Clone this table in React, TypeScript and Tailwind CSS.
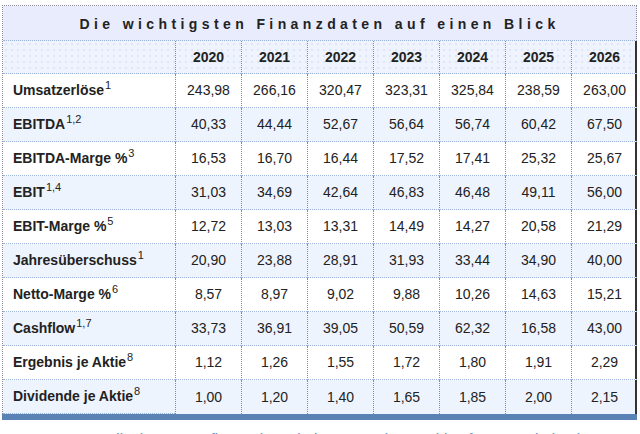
import React from 'react';

// Finanzdaten-Tabelle: Titelzeile, Jahreskopf, zehn Kennzahlen
const years = ['2020', '2021', '2022', '2023', '2024', '2025', '2026'];

const rows: { label: string; sup: string; values: string[] }[] = [
  { label: 'Umsatzerlöse', sup: '1', values: ['243,98', '266,16', '320,47', '323,31', '325,84', '238,59', '263,00'] },
  { label: 'EBITDA', sup: '1,2', values: ['40,33', '44,44', '52,67', '56,64', '56,74', '60,42', '67,50'] },
  { label: 'EBITDA-Marge %', sup: '3', values: ['16,53', '16,70', '16,44', '17,52', '17,41', '25,32', '25,67'] },
  { label: 'EBIT', sup: '1,4', values: ['31,03', '34,69', '42,64', '46,83', '46,48', '49,11', '56,00'] },
  { label: 'EBIT-Marge %', sup: '5', values: ['12,72', '13,03', '13,31', '14,49', '14,27', '20,58', '21,29'] },
  { label: 'Jahresüberschuss', sup: '1', values: ['20,90', '23,88', '28,91', '31,93', '33,44', '34,90', '40,00'] },
  { label: 'Netto-Marge %', sup: '6', values: ['8,57', '8,97', '9,02', '9,88', '10,26', '14,63', '15,21'] },
  { label: 'Cashflow', sup: '1,7', values: ['33,73', '36,91', '39,05', '50,59', '62,32', '16,58', '43,00'] },
  { label: 'Ergebnis je Aktie', sup: '8', values: ['1,12', '1,26', '1,55', '1,72', '1,80', '1,91', '2,29'] },
  { label: 'Dividende je Aktie', sup: '8', values: ['1,00', '1,20', '1,40', '1,65', '1,85', '2,00', '2,15'] },
];

export default function App() {
  return (
    <div className="w-[640px] h-[434px] overflow-hidden bg-white pt-[5px] pl-[2px] font-['Liberation_Sans',Arial,sans-serif] text-[14px] text-[#222]">
      <table className="w-[635px] table-fixed border-separate border-spacing-0 border-t border-l border-dotted border-[#8a8a9a]">
        <colgroup>
          <col className="w-[172px]" />
          {years.map((y) => (
            <col key={y} className="w-[66px]" />
          ))}
        </colgroup>
        <thead>
          <tr>
            <th
              colSpan={8}
              className="h-[35px] pt-[2px] bg-[#e8ecfd] border-r border-b border-dotted border-r-[#8a8a9a] border-b-[#9cb3d8] text-center font-bold tracking-[4.4px] text-[14px]"
            >
              Die wichtigsten Finanzdaten auf einen Blick
            </th>
          </tr>
          <tr className="bg-[#eef3fe] bg-[radial-gradient(#dde5f6_1px,transparent_1px)] bg-[size:6px_6px]">
            <th className="h-[33px] border-b border-dotted border-[#9cb3d8]" />
            {years.map((y, i) => (
              <th
                key={y}
                className={`h-[33px] border-b border-l border-dotted border-b-[#9cb3d8] border-l-[#8a8a9a] text-center font-bold ${
                  i === years.length - 1 ? 'shadow-[inset_-2px_0_0_#333]' : ''
                }`}
              >
                {y}
              </th>
            ))}
          </tr>
        </thead>
        <tbody>
          {rows.map((row, r) => {
            const light = r % 2 === 1;
            return (
              <tr key={row.label} className={light ? 'bg-[#eef4fe]' : 'bg-white'}>
                <td className="h-[34px] pl-[10px] border-b border-dotted border-[#9cb3d8] font-bold whitespace-nowrap">
                  {row.label}
                  <sup className="ml-[1px] text-[11px] font-normal relative -top-[6px]">{row.sup}</sup>
                </td>
                {row.values.map((v, i) => (
                  <td
                    key={i}
                    className={`h-[34px] text-center border-l border-dotted border-l-[#8a8a9a] ${
                      r === rows.length - 1 ? 'border-b-0' : 'border-b border-b-[#9cb3d8]'
                    } ${i === row.values.length - 1 ? 'shadow-[inset_-2px_0_0_#333]' : ''}`}
                  >
                    {v}
                  </td>
                ))}
              </tr>
            );
          })}
        </tbody>
      </table>
      <div className="w-[635px] h-[6px] bg-[#5a82b4]" />
      <p className="mt-[10px] pl-[86px] text-[15px] leading-[18px] text-[#6a8cc2] whitespace-nowrap">
        Quelle: boersengeflüster.de und Firmenangaben; Zahlen für 2026 sind Schätzungen
      </p>
    </div>
  );
}
